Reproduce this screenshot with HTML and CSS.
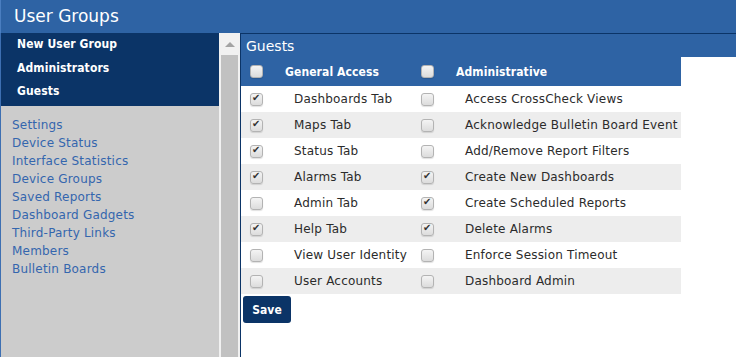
FILE: index.html
```html
<!DOCTYPE html>
<html lang="en">
<head>
    <meta charset="UTF-8">
    <title>User Groups</title>
    <link rel="stylesheet" href="styles.css">
</head>
<body>

<div class="header">User Groups</div>

<div class="main">
    <div class="sidebar">
        <ul class="group-nav">
            <li>New User Group</li>
            <li>Administrators</li>
            <li>Guests</li>
        </ul>
        <ul class="links">
            <li><a href="#">Settings</a></li>
            <li><a href="#">Device Status</a></li>
            <li><a href="#">Interface Statistics</a></li>
            <li><a href="#">Device Groups</a></li>
            <li><a href="#">Saved Reports</a></li>
            <li><a href="#">Dashboard Gadgets</a></li>
            <li><a href="#">Third-Party Links</a></li>
            <li><a href="#">Members</a></li>
            <li><a href="#">Bulletin Boards</a></li>
        </ul>
    </div>

    <div class="scrollbar">
        <div class="scroll-up"></div>
        <div class="scroll-thumb"></div>
    </div>

    <div class="content">
        <div class="panel-title">Guests</div>

        <div class="perm-table">
            <div class="perm-row head">
                <span class="cell-box"><input type="checkbox"></span>
                <span class="cell-label">General Access</span>
                <span class="cell-box"><input type="checkbox"></span>
                <span class="cell-label">Administrative</span>
            </div>
            <div class="perm-row">
                <span class="cell-box"><input type="checkbox" checked></span>
                <span class="cell-label">Dashboards Tab</span>
                <span class="cell-box"><input type="checkbox"></span>
                <span class="cell-label">Access CrossCheck Views</span>
            </div>
            <div class="perm-row">
                <span class="cell-box"><input type="checkbox" checked></span>
                <span class="cell-label">Maps Tab</span>
                <span class="cell-box"><input type="checkbox"></span>
                <span class="cell-label">Acknowledge Bulletin Board Event</span>
            </div>
            <div class="perm-row">
                <span class="cell-box"><input type="checkbox" checked></span>
                <span class="cell-label">Status Tab</span>
                <span class="cell-box"><input type="checkbox"></span>
                <span class="cell-label">Add/Remove Report Filters</span>
            </div>
            <div class="perm-row">
                <span class="cell-box"><input type="checkbox" checked></span>
                <span class="cell-label">Alarms Tab</span>
                <span class="cell-box"><input type="checkbox" checked></span>
                <span class="cell-label">Create New Dashboards</span>
            </div>
            <div class="perm-row">
                <span class="cell-box"><input type="checkbox"></span>
                <span class="cell-label">Admin Tab</span>
                <span class="cell-box"><input type="checkbox" checked></span>
                <span class="cell-label">Create Scheduled Reports</span>
            </div>
            <div class="perm-row">
                <span class="cell-box"><input type="checkbox" checked></span>
                <span class="cell-label">Help Tab</span>
                <span class="cell-box"><input type="checkbox" checked></span>
                <span class="cell-label">Delete Alarms</span>
            </div>
            <div class="perm-row">
                <span class="cell-box"><input type="checkbox"></span>
                <span class="cell-label">View User Identity</span>
                <span class="cell-box"><input type="checkbox"></span>
                <span class="cell-label">Enforce Session Timeout</span>
            </div>
            <div class="perm-row">
                <span class="cell-box"><input type="checkbox"></span>
                <span class="cell-label">User Accounts</span>
                <span class="cell-box"><input type="checkbox"></span>
                <span class="cell-label">Dashboard Admin</span>
            </div>
        </div>

        <button type="button" class="save-btn">Save</button>
    </div>
</div>

</body>
</html>
```

FILE: styles.css
```css
body {
    margin: 0;
    font-family: "DejaVu Sans", Verdana, sans-serif;
    font-size: 12px;
    letter-spacing: 0.2px;
    color: #2b2b2b;
    background-color: #fff;
    height: 357px;
    overflow: hidden;
    display: flex;
    flex-direction: column;
}

.header {
    height: 33px;
    line-height: 32px;
    padding-left: 13px;
    background-color: #2e63a4;
    border-left: 1px solid #4a7ec0;
    color: #fff;
    font-size: 17px;
    letter-spacing: 0;
    box-sizing: border-box;
}

.main {
    flex: 1;
    display: flex;
}

/* left column */
.sidebar {
    width: 219px;
    background-color: #cccccc;
    border-left: 1px solid #3d6fb2;
    box-sizing: border-box;
}

.group-nav {
    list-style: none;
    margin: 0;
    padding: 0 0 2px 0;
    background-color: #0b3467;
}

.group-nav li {
    line-height: 23.5px;
    padding-left: 16px;
    color: #fff;
    font-family: "DejaVu Sans Condensed", "DejaVu Sans", sans-serif;
    font-stretch: condensed;
    font-weight: bold;
    letter-spacing: 0.1px;
}

.links {
    list-style: none;
    margin: 0;
    padding: 10px 0 0 11px;
}

.links li {
    line-height: 18px;
}

.links a {
    color: #3466ae;
    text-decoration: none;
}

.scrollbar {
    width: 21px;
    background-color: #f1f1f1;
    display: flex;
    flex-direction: column;
}

.scroll-up {
    height: 22px;
    display: flex;
    justify-content: center;
    align-items: center;
}

.scroll-up::before {
    content: "";
    border-left: 5px solid transparent;
    border-right: 5px solid transparent;
    border-bottom: 5px solid #a3a3a3;
}

.scroll-thumb {
    flex: 1;
    margin: 0 2px;
    background-color: #c1c1c1;
}

/* right column */
.content {
    flex: 1;
    border-left: 1px solid #0b3467;
    border-top: 1px solid #0b3467;
}

.panel-title {
    height: 23px;
    line-height: 24px;
    padding-left: 5px;
    background-color: #2e63a4;
    color: #fff;
    font-size: 14px;
    letter-spacing: 0;
}

.perm-table {
    width: 440px;
}

.perm-row {
    display: grid;
    grid-template-columns: 34px 137px 35px 1fr;
    align-items: center;
    height: 26px;
    background-color: #fff;
}

.perm-row:nth-child(odd) {
    background-color: #ededed;
}

.perm-row.head {
    height: 29px;
    background-color: #2e63a4;
    color: #fff;
    font-family: "DejaVu Sans Condensed", "DejaVu Sans", sans-serif;
    font-stretch: condensed;
    font-weight: bold;
    letter-spacing: 0.1px;
}

.cell-box {
    padding-left: 9px;
    display: flex;
    align-items: center;
}

.cell-label {
    padding-left: 19px;
    white-space: nowrap;
}

.perm-row .cell-label:last-child {
    padding-left: 18px;
}

.perm-row.head .cell-label {
    padding-left: 10px;
}

.perm-row.head .cell-label:last-child {
    padding-left: 9px;
}

input[type="checkbox"] {
    appearance: none;
    -webkit-appearance: none;
    margin: 0;
    width: 13px;
    height: 13px;
    border: 1px solid #b3b3b3;
    border-radius: 3px;
    background: linear-gradient(#f4f4f4, #dcdcdc);
    box-shadow: 0 1px 1px rgba(0, 0, 0, 0.12);
    box-sizing: border-box;
    position: relative;
}

input[type="checkbox"]:checked::after {
    content: "\2714";
    position: absolute;
    left: 1px;
    top: -2px;
    font-size: 10px;
    color: #333;
}

.save-btn {
    margin: 2px 0 0 2px;
    width: 48px;
    height: 27px;
    background-color: #0b3467;
    color: #fff;
    font-family: "DejaVu Sans Condensed", "DejaVu Sans", sans-serif;
    font-stretch: condensed;
    font-size: 12px;
    font-weight: bold;
    border: none;
    border-radius: 3px;
    cursor: pointer;
}
```
